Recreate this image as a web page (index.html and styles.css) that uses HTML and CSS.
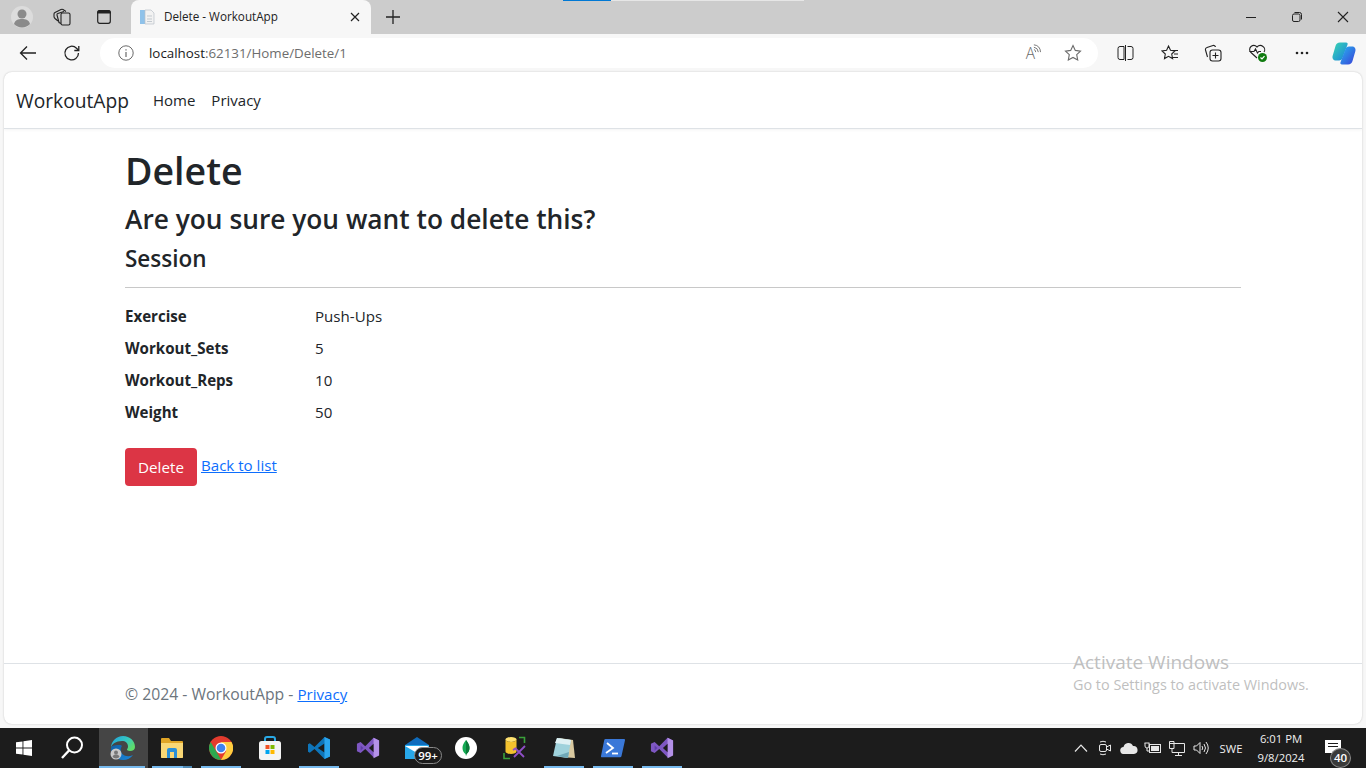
FILE: index.html
```html
<!DOCTYPE html>
<html lang="en">
<head>
<meta charset="utf-8">
<title>Delete - WorkoutApp</title>
<link rel="stylesheet" href="styles.css">
</head>
<body>
<svg class="defs" width="0" height="0" aria-hidden="true">
  <symbol id="vs" viewBox="0 0 26 26">
    <path fill="#7e57c2" d="M1 8.500 5 6.500l5 4.500 9-9 6 3v15l-6 3-9-9-5 4.500-4-2z"/>
    <path fill="#b491e8" d="M19 2l6 3v16l-6 3z"/>
    <path fill="#5e3ea8" d="M5 10.200v5.600L8 13z"/>
    <path fill="#1c1c1c" d="M19 8.500 14 13l5 4.500z"/>
  </symbol>
</svg>
<div class="app">
  <div class="progress"><span class="progress-a"></span><span class="progress-b"></span></div>
  <header class="tabstrip">
    <div class="slot s36">
      <svg width="24" height="24" viewBox="0 0 24 24"><circle cx="12" cy="12" r="11" fill="#dcdcdc"/><circle cx="12" cy="9" r="4.500" fill="#8a8a8a"/><path fill="#8a8a8a" d="M4 19c1-4 4-5 8-5s7 1 8 5a11 11 0 0 1-16 0z"/></svg>
    </div>
    <div class="slot s44">
      <svg width="18" height="18" viewBox="0 0 18 18" fill="none" stroke="#222" stroke-width="1.100"><rect x="8" y="5" width="9" height="12" rx="1.500"/><path d="M8 15.500 6 14.500 4 7a1.200 1.200 0 0 1 .8-1.400L11 3.500"/><path d="M5 13 2 10.500Q1 9.500 1 8.500V6q0-1 1-1.500L8 1.500q1-.5 2 0L13 3.500"/></svg>
    </div>
    <div class="slot s40">
      <svg width="16" height="16" viewBox="0 0 16 16" fill="none" stroke="#222" stroke-width="1.200"><rect x="1.700" y="1.700" width="12.600" height="12.600" rx="2"/><path fill="#222" d="M1.700 3.500a2 2 0 0 1 2-1.800h8.600a2 2 0 0 1 2 1.800v.5H1.700z"/></svg>
    </div>
    <div class="tab">
      <svg class="favicon" width="16" height="16" viewBox="0 0 16 16"><rect x="1" y="1" width="5" height="14" fill="#8fc2ea"/><path fill="#f2f2f2" stroke="#b9c0c8" stroke-width=".7" d="M6 1h6l3 3v11H6z"/><path stroke="#c3c9cf" d="M8 7h5M8 10h5M8 12.500h5"/></svg>
      <span class="tab-title">Delete - WorkoutApp</span>
      <svg class="tab-close" width="10" height="10" viewBox="0 0 10 10" stroke="#222" stroke-width="1.200"><path d="M1 1l8 8M9 1l-8 8"/></svg>
    </div>
    <div class="slot s44">
      <svg width="16" height="16" viewBox="0 0 16 16" stroke="#222" stroke-width="1.300"><path d="M8 1v14M1 8h14"/></svg>
    </div>
    <div class="window-controls">
      <div class="slot s46"><svg width="12" height="12" viewBox="0 0 12 12" stroke="#222"><path d="M1 6.500h10"/></svg></div>
      <div class="slot s46"><svg width="12" height="12" viewBox="0 0 12 12" fill="none" stroke="#222"><rect x="1.500" y="3" width="7.500" height="7.500" rx="1.500"/><path d="M3.500 1.500h5a2 2 0 0 1 2 2v5"/></svg></div>
      <div class="slot s46"><svg width="12" height="12" viewBox="0 0 12 12" stroke="#222" stroke-width="1.100"><path d="M1 1l10 10M11 1L1 11"/></svg></div>
    </div>
  </header>

  <div class="toolbar">
    <div class="slot s44">
      <svg width="18" height="16" viewBox="0 0 18 16" fill="none" stroke="#222" stroke-width="1.300"><path d="M17 8H1.500M8 1.500 1.500 8 8 14.500"/></svg>
    </div>
    <div class="slot s44">
      <svg width="18" height="18" viewBox="0 0 18 18" fill="none" stroke="#222" stroke-width="1.300"><path d="M15.500 9a6.800 6.800 0 1 1-2-4.800l2 2"/><path d="M15.800 2v4.500h-4.500"/></svg>
    </div>
    <div class="address">
      <svg class="info" width="16" height="16" viewBox="0 0 16 16" fill="none" stroke="#6a6a6a"><circle cx="8" cy="8" r="7.200"/><path stroke-width="1.200" d="M8 7v5M8 4.200v1.300"/></svg>
      <span class="url"><span class="host">localhost</span>:62131/Home/Delete/1</span>
      <div class="address-actions">
        <span class="read-aloud">A<svg class="aloud-waves" width="8" height="10" viewBox="0 0 9 11" fill="none" stroke="#6a6a6a"><path d="M1 6q2 .6 2 3M1 3.500q4.500.6 5 5.500M1 .8q7 .7 7.500 8.200"/></svg></span>
        <svg width="18" height="18" viewBox="0 0 18 18" fill="none" stroke="#6a6a6a" stroke-width="1.100"><path d="M9 1.500l2.300 4.900 5.200.7-3.800 3.600 1 5.300L9 13.400 4.300 16l1-5.300-3.800-3.600 5.200-.7z"/></svg>
      </div>
    </div>
    <div class="toolbar-right">
      <div class="slot s44 nudge"><svg width="17" height="16" viewBox="0 0 17 16" fill="none" stroke="#222" stroke-width="1"><path d="M7 1.500H3A2 2 0 0 0 1 3.500v9a2 2 0 0 0 2 2h4zM8.500 0v16M10.500 1.500H14a2 2 0 0 1 2 2v9a2 2 0 0 1-2 2h-3.500"/></svg></div>
      <div class="slot s44"><svg width="18" height="18" viewBox="0 0 18 18" fill="none" stroke="#222" stroke-width="1.100"><path d="M7.500 2l2 4.300 4.500.6-3.300 3.100.9 4.600-4.100-2.300-4 2.300.8-4.600L1 6.900l4.600-.6z"/><path d="M12 6.500h5M13 10h4M12 13.500h5"/></svg></div>
      <div class="slot s44 nudge"><svg width="18" height="18" viewBox="0 0 18 18" fill="none" stroke="#222" stroke-width="1.100"><path d="M3.500 13 1.500 6a2 2 0 0 1 1.500-2.500L9 1.500a2 2 0 0 1 2.500 1.500"/><rect x="6" y="6" width="11" height="11" rx="2.500"/><path d="M11.500 8.500v6M8.500 11.500h6"/></svg></div>
      <div class="slot s44"><svg width="20" height="20" viewBox="0 0 20 20" fill="none"><path stroke="#222" stroke-width="1.100" d="M9 15 3 9.500a4 4 0 0 1 0-6 4.500 4.500 0 0 1 6 .5 4.500 4.500 0 0 1 6-.5 4 4 0 0 1 1 5.500"/><path stroke="#222" stroke-width="1.100" d="M1.500 8.500H6l1.500-2.500 2 4 1.300-1.500H13"/><circle cx="14.500" cy="14.500" r="4.500" fill="#107c10"/><path stroke="#fff" stroke-width="1.200" d="M12.500 14.500l1.500 1.500 2.500-2.800"/></svg></div>
      <div class="slot s44"><svg width="14" height="4" viewBox="0 0 14 4" fill="#222"><circle cx="2" cy="2" r="1.300"/><circle cx="7" cy="2" r="1.300"/><circle cx="12" cy="2" r="1.300"/></svg></div>
      <div class="slot s40">
        <svg width="24" height="23" viewBox="0 0 24 23">
          <defs>
            <linearGradient id="cpa" x1="0" y1="0" x2="1" y2="1"><stop offset="0" stop-color="#3ad8b0"/><stop offset="1" stop-color="#1a7fe0"/></linearGradient>
            <linearGradient id="cpb" x1="0" y1="0" x2="1" y2="1"><stop offset="0" stop-color="#27b5f0"/><stop offset="1" stop-color="#3a3fd8"/></linearGradient>
          </defs>
          <path fill="url(#cpa)" d="M8 .5h6c1.500 0 2 1 1.500 2.200L10.500 16c-.6 1.500-1.500 2.500-3.500 2.500H4C1.500 18.500 0 16.500.6 14L3.500 4C4.200 1.700 5.500.5 8 .5z"/>
          <path fill="url(#cpb)" d="M16 22.500h-6c-1.500 0-2-1-1.500-2.200L13.500 7c.6-1.500 1.500-2.500 3.500-2.500h3c2.500 0 4 2 3.400 4.500L20.500 19c-.7 2.300-2 3.500-4.500 3.500z"/>
        </svg>
      </div>
    </div>
  </div>

  <div class="viewport">
    <div class="page">
      <nav class="navbar">
        <a class="brand">WorkoutApp</a>
        <a class="nav-link">Home</a>
        <a class="nav-link">Privacy</a>
      </nav>
      <main class="container">
        <h1>Delete</h1>
        <h3>Are you sure you want to delete this?</h3>
        <h4>Session</h4>
        <hr>
        <dl class="details">
          <dt>Exercise</dt><dd>Push-Ups</dd>
          <dt>Workout_Sets</dt><dd>5</dd>
          <dt>Workout_Reps</dt><dd>10</dd>
          <dt>Weight</dt><dd>50</dd>
        </dl>
        <div class="actions">
          <button class="btn-danger" type="button">Delete</button>
          <a class="link" href="#">Back to list</a>
        </div>
      </main>
      <footer class="footer">© 2024 - WorkoutApp - <a class="link" href="#">Privacy</a></footer>
      <div class="watermark">
        <div class="wm-title">Activate Windows</div>
        <div class="wm-sub">Go to Settings to activate Windows.</div>
      </div>
    </div>
  </div>

  <div class="taskbar">
    <div class="tb start"><svg width="16" height="16" viewBox="0 0 16 16" fill="#fff"><path d="M0 2.300 6.500 1.400v6.100H0zM7.400 1.300 16 0v7.500H7.400zM0 8.400h6.500v6.200L0 13.700zM7.400 8.400H16V16l-8.600-1.200z"/></svg></div>
    <div class="tb search"><svg width="24" height="24" viewBox="0 0 24 24" fill="none" stroke="#fff" stroke-width="2"><circle cx="14.500" cy="9" r="7.500"/><path stroke-width="2.400" d="M9 14.500 2 22"/></svg></div>
    <div class="tb active ul-edge">
      <svg width="26" height="26" viewBox="0 0 26 26">
        <defs>
          <linearGradient id="edg" x1="0" y1="0" x2="1" y2=".6"><stop offset="0" stop-color="#1f9fe0"/><stop offset=".6" stop-color="#35c8c0"/><stop offset="1" stop-color="#5fdc6a"/></linearGradient>
          <linearGradient id="edb" x1="0" y1="0" x2="1" y2="1"><stop offset="0" stop-color="#0f5fa8"/><stop offset="1" stop-color="#1a86d8"/></linearGradient>
        </defs>
        <path fill="url(#edb)" d="M1 13c0 7 5.500 12 12 12 4 0 8-2 10-5-4 2-8 1.500-10.500-1-2-2-2.500-5-.5-8-.5-.5-1-1-2-1-4 0-8.500 0-9 3z"/>
        <path fill="url(#edg)" d="M1 13C1 6 6.500 1 13 1c7 0 12 5 12 11 0 2.500-2 4-5 4-2 0-3-.8-3-1.500 0-.5 1-1 1-3C18 8 15.500 6 12 6 6 6 1.500 9 1 13z"/>
        <circle cx="6" cy="19" r="5.500" fill="#c9c9c9"/><circle cx="6" cy="17.500" r="2" fill="#777"/><path fill="#777" d="M2.500 22c.5-2 2-2.500 3.500-2.500s3 .5 3.500 2.500a5 5 0 0 1-7 0z"/>
      </svg>
    </div>
    <div class="tb ul-stack">
      <svg width="24" height="22" viewBox="0 0 24 22"><path fill="#e0a526" d="M1 2a1 1 0 0 1 1-1h7l2 3h11a1 1 0 0 1 1 1v15a1 1 0 0 1-1 1H2a1 1 0 0 1-1-1z"/><path fill="#f9d775" d="M1 6h22v14a1 1 0 0 1-1 1H2a1 1 0 0 1-1-1z"/><path fill="#2a8fd8" d="M7 21v-8a2 2 0 0 1 2-2h6a2 2 0 0 1 2 2v8h-3v-6h-4v6z"/></svg>
    </div>
    <div class="tb ul">
      <svg width="24" height="24" viewBox="0 0 24 24"><circle cx="12" cy="12" r="12" fill="#e33b2e"/><path fill="#ffcd3f" d="M12 6h10.500A12 12 0 0 1 12 24l5.200-9z"/><path fill="#2da94f" d="M1.700 6 7 15l5.200 9A12 12 0 0 1 1.700 6z"/><circle cx="12" cy="12" r="5.500" fill="#fff"/><circle cx="12" cy="12" r="4.300" fill="#3f83ee"/></svg>
    </div>
    <div class="tb">
      <svg width="24" height="26" viewBox="0 0 24 26"><path fill="none" stroke="#29a9e6" stroke-width="2" d="M7 6V4a2 2 0 0 1 2-2h6a2 2 0 0 1 2 2v2"/><rect x="1" y="6" width="22" height="19" rx="2.500" fill="#f4f4f4"/><rect x="7.500" y="10" width="4" height="4" fill="#f25022"/><rect x="12.500" y="10" width="4" height="4" fill="#7fba00"/><rect x="7.500" y="15" width="4" height="4" fill="#00a4ef"/><rect x="12.500" y="15" width="4" height="4" fill="#ffb900"/></svg>
    </div>
    <div class="tb ul">
      <svg width="24" height="24" viewBox="0 0 24 24"><path fill="#0e75ba" d="M17.500 1 7.500 11 2.800 7.200 1 8.200v7.600l1.800 1 4.700-3.800 10 10 5.500-2.600V3.600zM17.500 7.500v9L10.800 12z"/><path fill="#2aa5ee" d="M17.500 1 23 3.600v16.800L17.500 23V16.500V7.500z"/></svg>
    </div>
    <div class="tb"><svg width="24" height="24"><use href="#vs"/></svg></div>
    <div class="tb mail">
      <svg width="24" height="22" viewBox="0 0 24 22"><path fill="#0f6cbd" d="M12 0 24 8v2H0V8z"/><rect y="8" width="24" height="14" fill="#28a8ea"/><path fill="#fff" d="M0 9h24l-12 7z"/></svg>
      <span class="mail-badge">99+</span>
    </div>
    <div class="tb"><svg width="22" height="22" viewBox="0 0 22 22"><circle cx="11" cy="11" r="11" fill="#fff"/><path fill="#13aa52" d="M11 3c2.500 3 3.500 5.500 3.500 8 0 3-1.500 5-3 6L11 19l-.5-2c-1.500-1-3-3-3-6 0-2.500 1-5 3.500-8z"/><path fill="#0b7a3a" d="M11 3c2.500 3 3.500 5.500 3.500 8 0 3-1.500 5-3 6L11 19z"/></svg></div>
    <div class="tb"><svg width="24" height="24" viewBox="0 0 24 24"><path fill="none" stroke="#3aa13a" stroke-width="1.600" d="M16 1.500h5.500V7M1 17v5.500h6"/><ellipse cx="8" cy="3.500" rx="5.500" ry="2.500" fill="#ffe270"/><path fill="#f4c22e" d="M2.500 3.500v12c0 1.400 2.500 2.500 5.500 2.500s5.500-1.100 5.500-2.500v-12c0 1.400-2.500 2.500-5.500 2.500S2.500 4.900 2.500 3.500z"/><path stroke="#8f4fc7" stroke-width="1.800" d="M11 21l9-9M12 12l9 9M10 14l3-2M20 12l2-2"/></svg></div>
    <div class="tb ul"><svg width="24" height="24" viewBox="0 0 24 24"><path fill="#d9c9a0" d="M7 2l14 2 2 18-14-1z"/><path fill="#9fd2dc" d="M5 2l14 2-3 18-15-2z"/><path fill="#dff1f4" d="M5 2l14 2-1 5-15-2z"/><path fill="#6fa8b8" d="M5 20l11 2 1-6z"/></svg></div>
    <div class="tb ul"><svg width="24" height="20" viewBox="0 0 24 20"><path fill="#3a78d8" d="M4.500 1h18.500a1 1 0 0 1 1 1.200L20.500 18a1.500 1.500 0 0 1-1.500 1.200H1a1 1 0 0 1-1-1.200L3.200 2.200A1.500 1.500 0 0 1 4.500 1z"/><path fill="none" stroke="#fff" stroke-width="1.800" d="M6 5l6 5-7 5"/><path stroke="#fff" stroke-width="1.800" d="M11 15.500h6"/></svg></div>
    <div class="tb ul"><svg width="24" height="24"><use href="#vs"/></svg></div>
    <div class="tray">
      <div class="ti"><svg width="14" height="8" viewBox="0 0 14 8" fill="none" stroke="#e6e6e6" stroke-width="1.200"><path d="M1 7.500 7 1.200l6 6.300"/></svg></div>
      <div class="ti"><svg width="14" height="16" viewBox="0 0 14 16" fill="none" stroke="#e6e6e6"><rect x="1.500" y="4.500" width="7" height="7" rx="1.500"/><path d="M8.500 7l4-2v6l-4-2M2 2q3-1.500 6 0M2 14q3 1.500 6 0"/></svg></div>
      <div class="ti"><svg width="18" height="12" viewBox="0 0 18 12" fill="#e8e8e8"><path d="M4 12a3.500 3.500 0 0 1-.5-7A5 5 0 0 1 13 4a4 4 0 0 1 1 8z"/></svg></div>
      <div class="ti"><svg width="18" height="12" viewBox="0 0 18 12" fill="none" stroke="#e6e6e6"><path d="M1 1v3a2 2 0 0 0 4 0V1M3 6v3h2M.5 1h5"/><rect x="5.500" y="2.500" width="11" height="8"/><rect x="7" y="4" width="8" height="5" fill="#e6e6e6" stroke="none"/></svg></div>
      <div class="ti"><svg width="16" height="15" viewBox="0 0 16 15" fill="none" stroke="#e6e6e6"><path d="M5 .5H.5v7H5zM.5 2.500H5M5 2.500h10.500v9H3V8M9.500 11.500V14M6 14.500h7"/></svg></div>
      <div class="ti"><svg width="16" height="14" viewBox="0 0 16 14" fill="none" stroke="#e6e6e6"><path d="M1 5h2.500L7 1.500v11L3.500 9H1zM9 5q1.500 2 0 4M11 3q3 4 0 8M13 1q4.500 6 0 12"/></svg></div>
      <div class="lang">SWE</div>
      <div class="clock"><span>6:01 PM</span><span>9/8/2024</span></div>
      <div class="notif">
        <svg class="notif-icon" width="16" height="14" viewBox="0 0 16 14"><path fill="#fff" d="M0 0h16v13H0z"/><path stroke="#1c1c1c" d="M3 3.500h10M3 6.500h10"/></svg>
        <span class="notif-badge">40</span>
      </div>
    </div>
  </div>
</div>
</body>
</html>
```
FILE: styles.css
```css
* { box-sizing: border-box; }
html, body { margin: 0; height: 100%; overflow: hidden; }
body { font-family: "Open Sans", "Noto Sans", sans-serif; font-size: 15px; color: #212529; background: #f7f7f7; }
.defs { position: absolute; }
.app { height: 768px; display: flex; flex-direction: column; position: relative; }
.progress { position: absolute; top: 0; left: 563px; display: flex; height: 1px; }
.progress-a { width: 48px; background: #0078d4; }
.progress-b { width: 193px; background: #e6e6e6; }

.slot { display: flex; align-items: center; justify-content: center; flex: none; height: 100%; }
.s36 { width: 36px; } .s40 { width: 40px; } .s44 { width: 44px; } .s46 { width: 46px; }
.nudge { padding-right: 2px; }

.tabstrip { height: 34px; flex: none; background: #cccccc; display: flex; padding-left: 4px; }
.tab { width: 240px; margin-left: 7px; background: #f7f7f7; border-radius: 8px 8px 0 0; display: flex; align-items: center; padding: 0 11px 0 8px; }
.favicon { flex: none; }
.tab-title { margin: -2px 0 0 9px; flex: 1; font-size: 11.700px; color: #222; white-space: nowrap; }
.window-controls { margin-left: auto; display: flex; }

.toolbar { height: 38px; flex: none; display: flex; padding-left: 6px; background: #f7f7f7; }
.address { flex: 1; margin: 4px 0 4px 6px; background: #fff; border-radius: 15px; display: flex; align-items: center; padding: 0 16px 0 18px; }
.info { flex: none; }
.url { margin-left: 15px; font-size: 13.350px; color: #6d6d6d; }
.host { color: #1a1a1a; }
.address-actions { margin-left: auto; display: flex; align-items: center; gap: 23px; }
.read-aloud { display: flex; align-items: flex-start; font-size: 15.500px; font-weight: 300; line-height: 20px; color: #6a6a6a; }
.aloud-waves { margin: 1px 0 0 -2px; }
.toolbar-right { display: flex; flex: none; width: 268px; padding: 0 2px 0 6px; }

.viewport { flex: 1; min-height: 0; padding: 0 4px 4px; }
.page { height: 100%; background: #fff; border-radius: 8px; box-shadow: 0 0 2px rgba(0,0,0,.22); display: flex; flex-direction: column; position: relative; overflow: hidden; }

.navbar { height: 57px; flex: none; display: flex; align-items: center; padding: 0 12px; border-bottom: 1px solid #dee2e6; box-shadow: 0 1px 3px rgba(0,0,0,.05); }
.brand { font-size: 19.200px; margin-right: 24px; color: #212529; }
.nav-link { font-size: 15px; color: #212529; margin-right: 16px; }

.container { flex: 1; width: 1116px; margin-left: 121px; }
h1, h3, h4 { margin: 0; font-weight: 600; color: #212529; white-space: nowrap; }
h1 { font-size: 37.500px; line-height: 48px; margin-top: 18px; }
h3 { font-size: 26.300px; line-height: 38px; margin-top: 5px; }
h4 { font-size: 22.500px; line-height: 29px; margin-top: 6px; }
hr { border: 0; border-top: 1px solid #c8c8c8; margin: 14px 0 16px; }
.details { margin: 0; display: grid; grid-template-columns: 190px 1fr; row-gap: 8px; }
.details dt { font-weight: 700; font-size: 15.100px; line-height: 24px; }
.details dd { margin: 0; font-size: 15.100px; line-height: 24px; }
.actions { margin-top: 24px; display: flex; align-items: center; }
.btn-danger { width: 72px; height: 38px; padding: 0; border: 0; border-radius: 4px; background: #dc3545; color: #fff; font: 400 15.200px "Open Sans", sans-serif; margin-right: 4px; }
.link { color: #0d6efd; text-decoration: underline; font-size: 15.100px; position: relative; top: -2px; }

.footer { flex: none; height: 61px; border-top: 1px solid #dee2e6; padding: 17px 0 0 121px; font-size: 15.750px; line-height: 27px; color: #6c757d; }
.footer .link { top: 0; }
.watermark { position: absolute; left: 1069px; top: 578px; color: #bfbfbf; white-space: nowrap; }
.wm-title { font-size: 19px; line-height: 24px; }
.wm-sub { font-size: 14.400px; line-height: 21px; }

.taskbar { height: 40px; flex: none; background: #1c1c1c; display: flex; position: relative; }
.tb { width: 49px; flex: none; display: flex; align-items: center; justify-content: center; position: relative; padding: 0 2px 1px 0; }
.start { width: 47px; padding-right: 0; }
.search { width: 52px; }
.active { background: #454545; }
.ul::after, .ul-stack::after, .ul-edge::after { content: ""; position: absolute; bottom: 0; height: 2px; background: #76b9ed; }
.ul::after { left: 4px; width: 40px; }
.ul-edge::after { left: 0; width: 46px; }
.ul-stack::after { left: 4px; width: 40px; background: linear-gradient(to right, #76b9ed 31px, #4f8ab5 31px); }
.mail-badge { position: absolute; left: 21px; top: 19px; width: 28px; height: 17px; border: 1px solid #8a8a8a; border-radius: 9px; background: #1c1c1c; color: #fff; font-size: 11.500px; font-weight: 600; line-height: 15px; text-align: center; }
.tray { margin-left: auto; display: flex; padding-right: 9px; color: #f0f0f0; font-size: 11.300px; }
.ti { width: 24px; display: flex; align-items: center; justify-content: center; }
.lang { width: 36px; display: flex; align-items: center; justify-content: center; }
.clock { width: 64px; display: flex; flex-direction: column; align-items: center; justify-content: center; line-height: 19px; }
.notif { width: 44px; position: relative; }
.notif-icon { position: absolute; left: 12px; top: 12px; }
.notif-badge { position: absolute; left: 17px; top: 20px; width: 21px; height: 20px; border: 1px solid #8a8a8a; border-radius: 50%; background: #3a3a3a; color: #fff; font-size: 11.500px; font-weight: 600; line-height: 18px; text-align: center; }
```
